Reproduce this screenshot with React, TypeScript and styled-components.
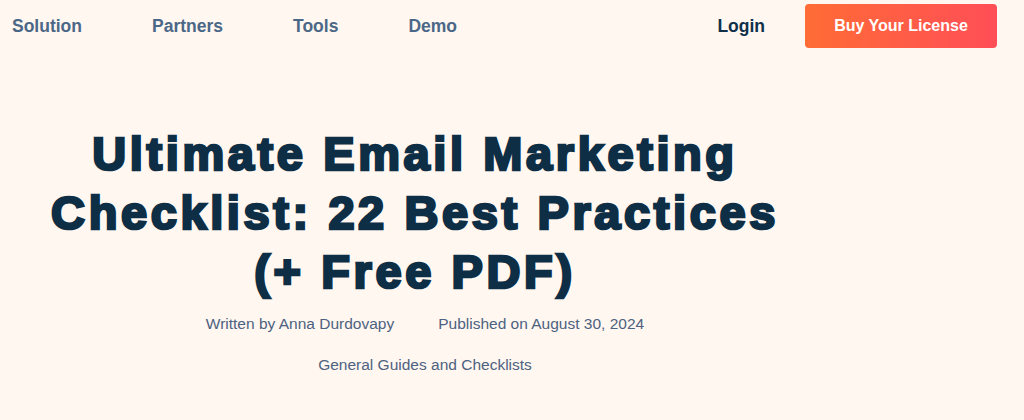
import React from 'react';
import styled, { createGlobalStyle } from 'styled-components';

const GlobalStyle = createGlobalStyle`
  html, body {
    margin: 0;
    padding: 0;
    background: #fff7f0;
    font-family: "Liberation Sans", Arial, sans-serif;
  }
`;

const Page = styled.div`
  width: 1024px;
  height: 420px;
  overflow: hidden;
  background: #fff7f0;
`;

const Header = styled.header`
  display: flex;
  align-items: center;
  height: 52px;
  padding: 0 27px 0 12px;
`;

const Nav = styled.nav`
  display: flex;
  gap: 70px;
  flex: 1;
`;

const NavLink = styled.a`
  font-size: 17.5px;
  font-weight: 700;
  color: #4b6787;
  text-decoration: none;
`;

const Login = styled.a`
  font-size: 17.5px;
  font-weight: 700;
  color: #10304a;
  margin-right: 40px;
  text-decoration: none;
`;

const BuyButton = styled.button`
  width: 192px;
  height: 44px;
  border: none;
  border-radius: 4px;
  background: linear-gradient(90deg, #ff6c35 0%, #ff4e57 100%);
  color: #fff;
  font-family: inherit;
  font-size: 16px;
  font-weight: 700;
`;

const Hero = styled.section`
  width: 850px;
  display: flex;
  flex-direction: column;
  align-items: center;
  padding-top: 72px;
`;

const Title = styled.h1`
  margin: 0 20px 0 0;
  width: 780px;
  font-size: 47px;
  line-height: 59px;
  font-weight: 700;
  letter-spacing: 3.6px;
  -webkit-text-stroke: 2.6px #0e2e45;
  color: #0e2e45;
  text-align: center;
`;

const Meta = styled.div`
  display: flex;
  gap: 44px;
  margin-top: 14px;
  font-size: 15.5px;
  color: #4d6280;
`;

const Category = styled.div`
  margin-top: 23px;
  font-size: 15.5px;
  color: #4d6280;
`;

export default function App() {
  return (
    <Page>
      <GlobalStyle />
      <Header>
        <Nav>
          <NavLink>Solution</NavLink>
          <NavLink>Partners</NavLink>
          <NavLink>Tools</NavLink>
          <NavLink>Demo</NavLink>
        </Nav>
        <Login>Login</Login>
        <BuyButton>Buy Your License</BuyButton>
      </Header>
      <Hero>
        <Title>
          Ultimate Email Marketing Checklist: 22 Best Practices (+ Free PDF)
        </Title>
        <Meta>
          <span>Written by Anna Durdovapy</span>
          <span>Published on August 30, 2024</span>
        </Meta>
        <Category>General Guides and Checklists</Category>
      </Hero>
    </Page>
  );
}
